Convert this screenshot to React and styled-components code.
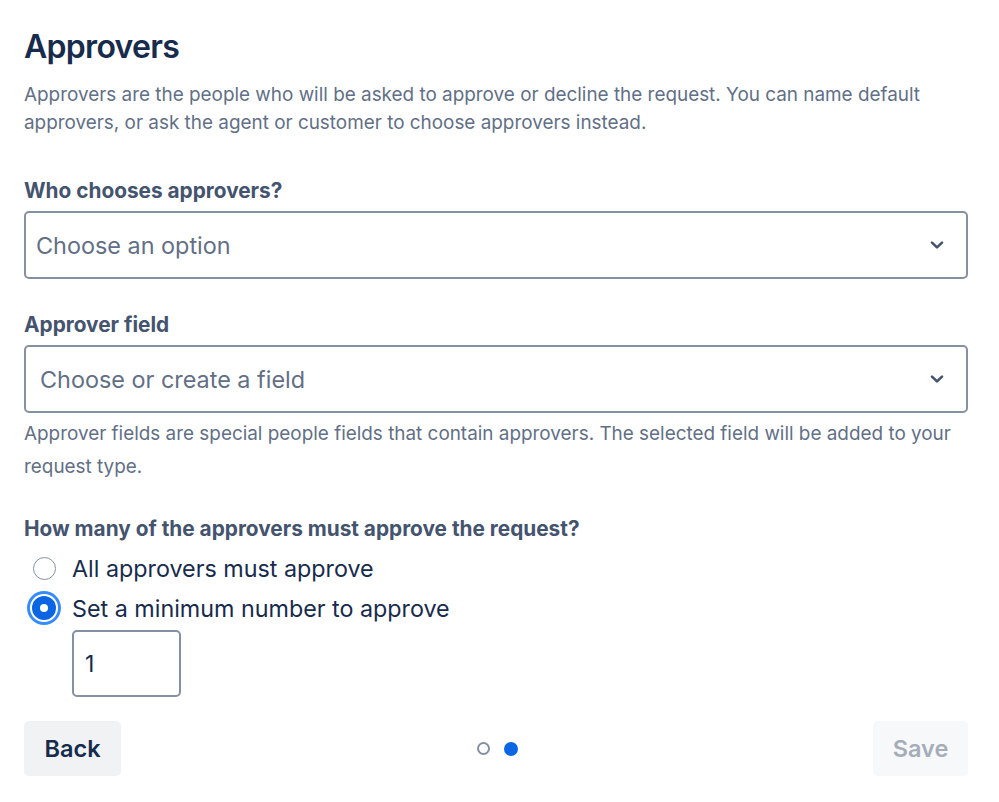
import React from "react";
import styled, { createGlobalStyle } from "styled-components";

const Global = createGlobalStyle`
  html, body { margin: 0; padding: 0; background: #ffffff; }
  body { font-family: Inter, "Noto Sans", "Liberation Sans", sans-serif; -webkit-font-smoothing: antialiased; }
  * { box-sizing: border-box; }
`;

const Page = styled.div`
  width: 999px;
  padding: 27px 31px 0 24px;
  display: flex;
  flex-direction: column;
`;

const Title = styled.h1`
  margin: 0;
  font-size: 32px;
  line-height: 40px;
  font-weight: 600;
  letter-spacing: -0.7px;
  color: #172b4d;
`;

const Description = styled.p`
  margin: 14px 0 0;
  font-size: 18.9px;
  line-height: 28px;
  color: #626f86;
`;

const Label = styled.div`
  margin-top: ${(p) => p.$mt}px;
  font-size: 20.8px;
  line-height: 24px;
  font-weight: 700;
  color: #44546f;
`;

const Select = styled.div`
  margin-top: 8px;
  height: 68px;
  border: 2px solid #8590a2;
  border-radius: 5px;
  display: flex;
  align-items: center;
  padding-left: ${(p) => p.$pl}px;
  padding-right: 21px;
`;

const Placeholder = styled.span`
  flex: 1;
  font-size: 23.4px;
  color: #626f86;
`;

const Help = styled.p`
  margin: 4px 0 0;
  font-size: 18.9px;
  line-height: 33px;
  color: #626f86;
`;

const RadioGroup = styled.div`
  margin-top: 7px;
  display: flex;
  flex-direction: column;
`;

const RadioRow = styled.label`
  height: 40px;
  display: flex;
  align-items: center;
  gap: 8px;
`;

const RadioSlot = styled.span`
  width: 40px;
  height: 40px;
  display: flex;
  align-items: center;
  justify-content: center;
`;

const RadioCircle = styled.span`
  display: block;
  border-radius: 50%;
  ${(p) =>
    p.$checked
      ? `
    width: 24px; height: 24px;
    background: #0c66e4;
    box-shadow: 0 0 0 2px #ffffff, 0 0 0 5px #388bff;
    position: relative;
    &::after {
      content: "";
      position: absolute;
      left: 8px; top: 8px;
      width: 8px; height: 8px;
      border-radius: 50%;
      background: #ffffff;
    }
  `
      : `
    width: 23px; height: 23px;
    border: 1.5px solid #8590a2;
    background: #ffffff;
  `}
`;

const RadioText = styled.span`
  font-size: 23.3px;
  color: #172b4d;
`;

const NumberBox = styled.div`
  margin: 2px 0 0 48px;
  width: 109px;
  height: 67px;
  border: 2px solid #8590a2;
  border-radius: 5px;
  display: flex;
  align-items: center;
  padding-left: 11px;
  font-size: 23px;
  color: #172b4d;
`;

const Footer = styled.div`
  margin-top: 24px;
  display: flex;
  align-items: center;
  justify-content: space-between;
`;

const Button = styled.button`
  height: 55px;
  width: ${(p) => p.$w}px;
  border: none;
  border-radius: 5px;
  font-family: inherit;
  font-size: 23.5px;
  font-weight: 600;
  background: ${(p) => (p.$disabled ? "#f7f8f9" : "#f1f2f4")};
  color: ${(p) => (p.$disabled ? "#a5adba" : "#172b4d")};
  padding: 0;
`;

const Dots = styled.div`
  display: flex;
  align-items: center;
  gap: 14px;
`;

const Dot = styled.span`
  display: block;
  border-radius: 50%;
  width: ${(p) => (p.$active ? 14 : 13)}px;
  height: ${(p) => (p.$active ? 14 : 13)}px;
  background: ${(p) => (p.$active ? "#0c66e4" : "#ffffff")};
  border: ${(p) => (p.$active ? "none" : "2px solid #8590a2")};
`;

const Chevron = () => (
  <svg width="16" height="16" viewBox="0 0 16 16">
    <path d="M3 5.6 L8 10.4 L13 5.6" fill="none" stroke="#44546f" strokeWidth="2.6" strokeLinecap="round" strokeLinejoin="round" />
  </svg>
);

export default function App() {
  return (
    <>
      <Global />
      <Page>
        <Title>Approvers</Title>
        <Description>
          Approvers are the people who will be asked to approve or decline the request. You can name default approvers, or ask the agent or customer to choose approvers instead.
        </Description>

        <Label $mt={42}>Who chooses approvers?</Label>
        <Select $pl={10}>
          <Placeholder>Choose an option</Placeholder>
          <Chevron />
        </Select>

        <Label $mt={34}>Approver field</Label>
        <Select $pl={14}>
          <Placeholder>Choose or create a field</Placeholder>
          <Chevron />
        </Select>
        <Help>
          Approver fields are special people fields that contain approvers. The selected field will be added to your request type.
        </Help>

        <Label $mt={34}>How many of the approvers must approve the request?</Label>
        <RadioGroup>
          <RadioRow>
            <RadioSlot><RadioCircle /></RadioSlot>
            <RadioText>All approvers must approve</RadioText>
          </RadioRow>
          <RadioRow>
            <RadioSlot><RadioCircle $checked /></RadioSlot>
            <RadioText>Set a minimum number to approve</RadioText>
          </RadioRow>
        </RadioGroup>
        <NumberBox>1</NumberBox>

        <Footer>
          <Button $w={97}>Back</Button>
          <Dots>
            <Dot />
            <Dot $active />
          </Dots>
          <Button $w={95} $disabled>Save</Button>
        </Footer>
      </Page>
    </>
  );
}
